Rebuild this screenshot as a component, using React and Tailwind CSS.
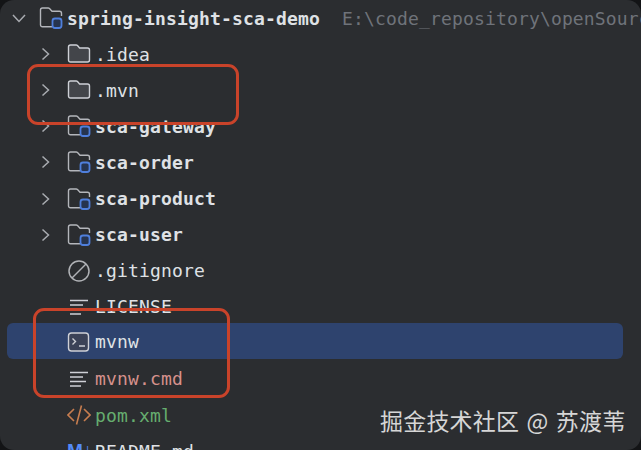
const MONO = "font-['DejaVu_Sans_Mono','Liberation_Mono',monospace]";

const Chevron = ({ open }) => (
  <svg width="14" height="14" viewBox="0 0 14 14" fill="none" stroke="#a8abb0" strokeWidth="1.5">
    <path d={open ? "M1 4l6 6.5L13 4" : "M3.5 1.5L9.5 7l-6 5.5"} />
  </svg>
);

const FolderIcon = () => (
  <svg width="24" height="24" viewBox="0 0 24 24" fill="#43454a" stroke="#ced0d6" strokeWidth="1.4">
    <path d="M3.5 3h5.6c.6 0 1 .2 1.4.6L12.6 6h7.9c1.2 0 2 .8 2 2v10c0 1.2-.8 2-2 2h-17c-1.200 0-2-.8-2-2V5c0-1.200.8-2 2-2z" />
  </svg>
);

const ModuleIcon = () => (
  <svg width="24" height="24" viewBox="0 0 24 24" fill="none">
    <path
      d="M13 20.700H3.500c-1.200 0-2-.8-2-2V4c0-1.200.8-2 2-2h5.600c.6 0 1 .2 1.400.6L13 5.200h7.500c1.200 0 2 .8 2 2v2.800"
      stroke="#b4b6bb"
      strokeWidth="1.400"
    />
    <rect x="13.500" y="12.500" width="9" height="9.500" rx="2.500" fill="#26344f" stroke="#4f7fdc" strokeWidth="1.800" />
  </svg>
);

const IgnoreIcon = () => (
  <svg width="24" height="24" viewBox="0 0 24 24" fill="none" stroke="#b0b2b6" strokeWidth="1.500">
    <circle cx="12" cy="12" r="10" />
    <path d="M5 19L19 5" />
  </svg>
);

const TextIcon = () => (
  <svg width="24" height="24" viewBox="0 0 24 24" fill="none" stroke="#ced0d6" strokeWidth="1.400">
    <path d="M3 5.500h18M3 10h13M3 14.500h16M3 19h11" />
  </svg>
);

const TerminalIcon = () => (
  <svg width="24" height="24" viewBox="0 0 24 24" fill="#3b4257" stroke="#ced0d6" strokeWidth="1.400">
    <rect x="1.500" y="3" width="20" height="18" rx="3" />
    <path d="M5.500 8.500l3 3-3 3M12 16h6" fill="none" />
  </svg>
);

const XmlIcon = () => (
  <svg width="24" height="24" viewBox="0 0 24 24" fill="none" stroke="#c77d4f" strokeWidth="1.600">
    <path d="M7 6l-6 6 6 6M17 6l6 6-6 6M14.500 2.500l-5 19" />
  </svg>
);

const MarkdownIcon = () => (
  <span className="w-6 font-['Liberation_Sans',sans-serif] text-[19px] leading-6 font-bold whitespace-nowrap text-[#548af7]">
    M↓
  </span>
);

const ROWS = [
  { name: ".idea", icon: <FolderIcon />, arrow: true },
  { name: ".mvn", icon: <FolderIcon />, arrow: true },
  { name: "sca-gateway", icon: <ModuleIcon />, arrow: true, bold: true },
  { name: "sca-order", icon: <ModuleIcon />, arrow: true, bold: true },
  { name: "sca-product", icon: <ModuleIcon />, arrow: true, bold: true },
  { name: "sca-user", icon: <ModuleIcon />, arrow: true, bold: true },
  { name: ".gitignore", icon: <IgnoreIcon /> },
  { name: "LICENSE", icon: <TextIcon /> },
  { name: "mvnw", icon: <TerminalIcon />, selected: true },
  { name: "mvnw.cmd", icon: <TextIcon />, color: "text-[#d6918c]" },
  { name: "pom.xml", icon: <XmlIcon />, color: "text-[#66ad6f]" },
  { name: "README.md", icon: <MarkdownIcon /> },
];

const TreeRow = ({ row }) => (
  <div
    className={`mr-[18px] ml-[7px] flex h-[36.1px] shrink-0 items-center rounded-md pl-[32px] ${
      row.selected ? "-mt-[2px] mb-[2px] bg-[#2e436e] pt-[2px]" : ""
    }`}
  >
    <span className="flex w-[28px] shrink-0 items-center">{row.arrow ? <Chevron /> : null}</span>
    <span className="flex w-[28px] shrink-0 items-center">{row.icon}</span>
    <span
      className={`whitespace-nowrap ${row.bold ? "font-bold" : ""} ${row.color || "text-[#dfe1e5]"}`}
    >
      {row.name}
    </span>
  </div>
);

export default function App() {
  return (
    <div className="h-[450px] w-[641px] overflow-hidden bg-[#131416]">
      <div
        className={`relative flex h-full flex-col overflow-hidden rounded-[14px] bg-[#2b2d30] text-[18px] tracking-[0.16px] ${MONO}`}
      >
        <div className="flex h-[36.1px] shrink-0 items-center pl-[12px] whitespace-nowrap">
          <span className="flex w-[27px] shrink-0 items-center">
            <Chevron open />
          </span>
          <span className="flex w-[28px] shrink-0 items-center">
            <ModuleIcon />
          </span>
          <span className="font-bold text-[#dfe1e5]">spring-insight-sca-demo</span>
          <span className="ml-[22px] text-[#6f737a]">E:\code_repository\openSource</span>
        </div>

        {ROWS.map((row) => (
          <TreeRow key={row.name} row={row} />
        ))}

        {/* hand-drawn annotation boxes */}
        <div className="absolute top-[64px] left-[27px] h-[61px] w-[212px] rounded-[11px] border-[3px] border-[#c9432a]" />
        <div className="absolute top-[308px] left-[33px] h-[90px] w-[197px] rounded-[11px] border-[3px] border-[#c9432a]" />

        <div className="absolute top-[403px] left-[380px] font-['Noto_Sans_CJK_SC',sans-serif] text-[23px] leading-[34px] tracking-[0.2px] [word-spacing:2px] whitespace-nowrap text-[#d6d6d6]">
          掘金技术社区 @ 苏渡苇
        </div>
      </div>
    </div>
  );
}
